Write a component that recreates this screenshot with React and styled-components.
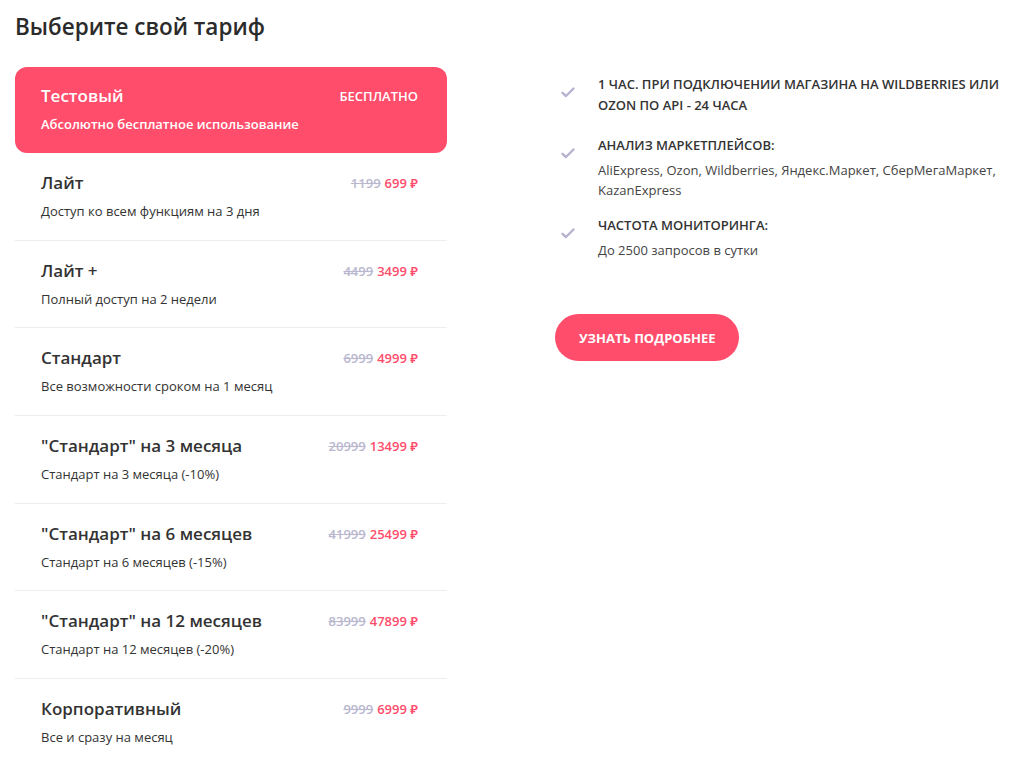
import styled, { createGlobalStyle } from 'styled-components';

const GlobalStyle = createGlobalStyle`
  * {
    box-sizing: border-box;
  }

  body {
    margin: 0;
    background: #fff;
    font-family: 'Open Sans', 'Noto Sans', sans-serif;
    color: #333;
  }
`;

const Page = styled.main`
  padding: 10px 15px 0;
`;

const Heading = styled.h2`
  margin: 0 0 23px;
  font-size: 22.5px;
  font-weight: 600;
  line-height: 34px;
  color: #2b2b2b;
`;

const Layout = styled.div`
  display: grid;
  grid-template-columns: 432px 1fr;
  gap: 108px;
`;

const PlanList = styled.ul`
  list-style: none;
  margin: 0;
  padding: 0;
`;

const Plan = styled.li`
  display: grid;
  grid-template-columns: 1fr auto;
  align-content: start;
  row-gap: 6px;
  height: ${({ $active }) => ($active ? '86px' : '87.7px')};
  padding: 17px 29px 0 26px;
  padding-top: ${({ $active }) => ($active ? '17px' : '18px')};
  border-radius: ${({ $active }) => ($active ? '12px' : '0')};
  background: ${({ $active }) => ($active ? '#ff4d6b' : 'transparent')};
  color: ${({ $active }) => ($active ? '#fff' : '#333')};
  border-bottom: ${({ $active, $last }) =>
    $active || $last ? 'none' : '1px solid #ededed'};
  cursor: pointer;
`;

const PlanName = styled.span`
  font-size: 17px;
  font-weight: 600;
  line-height: 24px;
`;

const Price = styled.span`
  align-self: center;
  font-size: 13px;
  font-weight: 600;
  color: ${({ $active }) => ($active ? '#fff' : '#ff4d6b')};
  text-transform: ${({ $active }) => ($active ? 'uppercase' : 'none')};
`;

const OldPrice = styled.s`
  color: #b9b8cf;
  margin-right: 4px;
`;

const PlanDesc = styled.span`
  grid-column: 1 / -1;
  font-size: 13px;
  font-weight: ${({ $active }) => ($active ? 600 : 400)};
  line-height: 20px;
`;

const Side = styled.div`
  padding-top: 7px;
`;

const Features = styled.ul`
  list-style: none;
  margin: 0 0 54px;
  padding: 0 0 0 6px;
  display: flex;
  flex-flow: column;
  gap: 15px;
`;

const Feature = styled.li`
  display: grid;
  grid-template-columns: 37px 1fr;
  padding-bottom: ${({ $plain }) => ($plain ? '4px' : '0')};
`;

const Check = styled.svg`
  width: 14px;
  height: 11px;
  margin-top: 13px;
`;

const FeatureTitle = styled.div`
  font-size: 13px;
  font-weight: 600;
  line-height: 21px;
  text-transform: uppercase;
  color: #333;
`;

const FeatureText = styled.div`
  margin-top: 4px;
  font-size: 13px;
  line-height: 20px;
  color: #444;
`;

const MoreButton = styled.button`
  height: 47px;
  padding: 0 24px;
  border: none;
  border-radius: 24px;
  background: #ff4d6b;
  color: #fff;
  font-family: inherit;
  font-size: 13px;
  font-weight: 700;
  text-transform: uppercase;
  cursor: pointer;
`;

const plans = [
  { name: 'Лайт', desc: 'Доступ ко всем функциям на 3 дня', old: '1199', price: '699' },
  { name: 'Лайт +', desc: 'Полный доступ на 2 недели', old: '4499', price: '3499' },
  { name: 'Стандарт', desc: 'Все возможности сроком на 1 месяц', old: '6999', price: '4999' },
  { name: '"Стандарт" на 3 месяца', desc: 'Стандарт на 3 месяца (-10%)', old: '20999', price: '13499' },
  { name: '"Стандарт" на 6 месяцев', desc: 'Стандарт на 6 месяцев (-15%)', old: '41999', price: '25499' },
  { name: '"Стандарт" на 12 месяцев', desc: 'Стандарт на 12 месяцев (-20%)', old: '83999', price: '47899' },
  { name: 'Корпоративный', desc: 'Все и сразу на месяц', old: '9999', price: '6999' },
];

const features = [
  { title: '1 час. При подключении магазина на Wildberries или Ozon по API - 24 часа' },
  {
    title: 'Анализ маркетплейсов:',
    text: 'AliExpress, Ozon, Wildberries, Яндекс.Маркет, СберМегаМаркет, KazanExpress',
  },
  { title: 'Частота мониторинга:', text: 'До 2500 запросов в сутки' },
];

function CheckIcon() {
  return (
    <Check viewBox="0 0 14 11" fill="none">
      <path
        d="M1.5 5.8 L5 9 L12.5 1.5"
        stroke="#b5b3cf"
        strokeWidth="2.4"
        strokeLinecap="round"
        strokeLinejoin="round"
      />
    </Check>
  );
}

export default function App() {
  return (
    <>
      <GlobalStyle />
      <Page>
        <Heading>Выберите свой тариф</Heading>
        <Layout>
          <PlanList>
            <Plan $active>
              <PlanName>Тестовый</PlanName>
              <Price $active>Бесплатно</Price>
              <PlanDesc $active>Абсолютно бесплатное использование</PlanDesc>
            </Plan>
            {plans.map((p, i) => (
              <Plan key={p.name} $last={i === plans.length - 1}>
                <PlanName>{p.name}</PlanName>
                <Price>
                  <OldPrice>{p.old}</OldPrice>
                  {p.price} ₽
                </Price>
                <PlanDesc>{p.desc}</PlanDesc>
              </Plan>
            ))}
          </PlanList>

          <Side>
            <Features>
              {features.map((f) => (
                <Feature key={f.title} $plain={!f.text}>
                  <CheckIcon />
                  <div>
                    <FeatureTitle>{f.title}</FeatureTitle>
                    {f.text && <FeatureText>{f.text}</FeatureText>}
                  </div>
                </Feature>
              ))}
            </Features>
            <MoreButton>Узнать подробнее</MoreButton>
          </Side>
        </Layout>
      </Page>
    </>
  );
}
